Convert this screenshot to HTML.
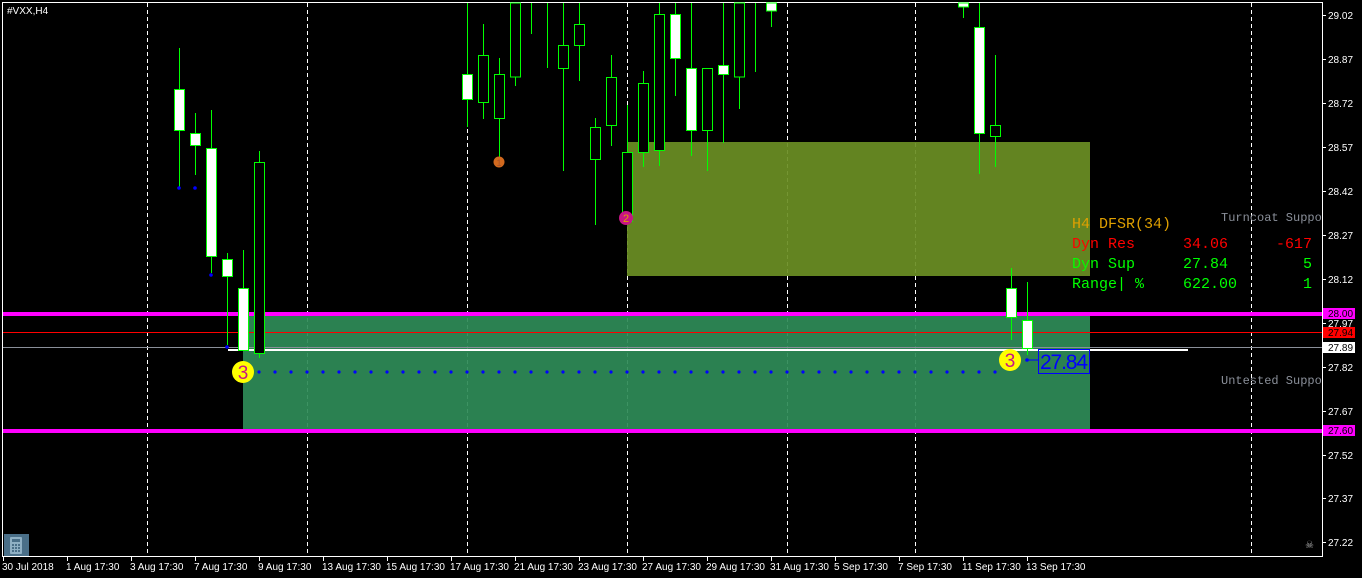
<!DOCTYPE html>
<html><head><meta charset="utf-8"><style>
html,body{margin:0;padding:0;background:#000;width:1362px;height:578px;overflow:hidden}
svg{display:block}
.ax{font-family:"Liberation Sans",sans-serif;font-size:10px;fill:#fff}
.mono{font-family:"Liberation Mono",monospace;font-size:15px}
</style></head><body>
<svg width="1362" height="578" viewBox="0 0 1362 578" xmlns="http://www.w3.org/2000/svg">
<rect width="1362" height="578" fill="#000"/>
<!-- grid -->
<g stroke="#fff" stroke-width="1" stroke-dasharray="4,3">
<line x1="147.5" y1="3" x2="147.5" y2="556"/>
<line x1="307.5" y1="3" x2="307.5" y2="556"/>
<line x1="467.5" y1="3" x2="467.5" y2="556"/>
<line x1="627.5" y1="3" x2="627.5" y2="556"/>
<line x1="787.5" y1="3" x2="787.5" y2="556"/>
<line x1="915.5" y1="3" x2="915.5" y2="556"/>
<line x1="1251.5" y1="3" x2="1251.5" y2="556"/>
</g>
<!-- zones -->
<rect x="627" y="142" width="463" height="134" fill="#6b8e23" fill-opacity="0.93"/>
<rect x="243" y="316" width="847" height="113" fill="#2e8b57" fill-opacity="0.93"/>
<!-- frame -->
<rect x="2.5" y="2.5" width="1320" height="554" fill="none" stroke="#fff"/>
<!-- horizontal lines -->
<line x1="3" y1="332.5" x2="1322" y2="332.5" stroke="#f00"/>
<line x1="3" y1="347.5" x2="1322" y2="347.5" stroke="#8a8f99"/>
<rect x="228" y="349" width="960" height="2" fill="#fff"/>
<rect x="3" y="312" width="1319" height="4" fill="#f0f"/>
<rect x="3" y="429" width="1319" height="4" fill="#f0f"/>
<!-- candles -->
<g stroke="#0f0" stroke-width="1">
<line x1="179.5" y1="48" x2="179.5" y2="187"/><rect x="174.5" y="89.5" width="10" height="41" fill="#fff"/>
<line x1="195.5" y1="113" x2="195.5" y2="175"/><rect x="190.5" y="133.5" width="10" height="12" fill="#fff"/>
<line x1="211.5" y1="110" x2="211.5" y2="273"/><rect x="206.5" y="148.5" width="10" height="108" fill="#fff"/>
<line x1="227.5" y1="253" x2="227.5" y2="345"/><rect x="222.5" y="259.5" width="10" height="17" fill="#fff"/>
<line x1="243.5" y1="250" x2="243.5" y2="348"/><rect x="238.5" y="288.5" width="10" height="62" fill="#fff"/>
<line x1="259.5" y1="151" x2="259.5" y2="358"/><rect x="254.5" y="162.5" width="10" height="191" fill="#000"/>
<line x1="467.5" y1="3" x2="467.5" y2="127"/><rect x="462.5" y="74.5" width="10" height="25" fill="#fff"/>
<line x1="483.5" y1="24" x2="483.5" y2="119"/><rect x="478.5" y="55.5" width="10" height="47" fill="#000"/>
<line x1="499.5" y1="58" x2="499.5" y2="165"/><rect x="494.5" y="74.5" width="10" height="44" fill="#000"/>
<line x1="515.5" y1="3" x2="515.5" y2="86"/><rect x="510.5" y="3" width="10" height="74" fill="#000"/>
<line x1="531.5" y1="3" x2="531.5" y2="34"/>
<line x1="547.5" y1="3" x2="547.5" y2="68"/>
<line x1="563.5" y1="3" x2="563.5" y2="171"/><rect x="558.5" y="45.5" width="10" height="23" fill="#000"/>
<line x1="579.5" y1="3" x2="579.5" y2="81"/><rect x="574.5" y="24.5" width="10" height="21" fill="#000"/>
<line x1="595.5" y1="118" x2="595.5" y2="225"/><rect x="590.5" y="127.5" width="10" height="32" fill="#000"/>
<line x1="611.5" y1="55" x2="611.5" y2="146"/><rect x="606.5" y="77.5" width="10" height="48" fill="#000"/>
<line x1="627.5" y1="105" x2="627.5" y2="222"/><rect x="622.5" y="152.5" width="10" height="69" fill="#000"/>
<line x1="643.5" y1="71" x2="643.5" y2="167"/><rect x="638.5" y="83.5" width="10" height="69" fill="#000"/>
<line x1="659.5" y1="3" x2="659.5" y2="166"/><rect x="654.5" y="14.5" width="10" height="136" fill="#000"/>
<line x1="675.5" y1="3" x2="675.5" y2="96"/><rect x="670.5" y="14.5" width="10" height="44" fill="#fff"/>
<line x1="691.5" y1="3" x2="691.5" y2="156"/><rect x="686.5" y="68.5" width="10" height="62" fill="#fff"/>
<line x1="707.5" y1="68" x2="707.5" y2="171"/><rect x="702.5" y="68.5" width="10" height="62" fill="#000"/>
<line x1="723.5" y1="3" x2="723.5" y2="143"/><rect x="718.5" y="65.5" width="10" height="9" fill="#fff"/>
<line x1="739.5" y1="3" x2="739.5" y2="109"/><rect x="734.5" y="3" width="10" height="74" fill="#000"/>
<line x1="755.5" y1="3" x2="755.5" y2="72"/>
<line x1="771.5" y1="3" x2="771.5" y2="27"/><rect x="766.5" y="3" width="10" height="8" fill="#fff"/>
<line x1="963.5" y1="3" x2="963.5" y2="18"/><rect x="958.5" y="3" width="10" height="4" fill="#fff"/>
<line x1="979.5" y1="3" x2="979.5" y2="174"/><rect x="974.5" y="27.5" width="10" height="106" fill="#fff"/>
<line x1="995.5" y1="55" x2="995.5" y2="167"/><rect x="990.5" y="125.5" width="10" height="11" fill="#000"/>
<line x1="1011.5" y1="268" x2="1011.5" y2="340"/><rect x="1006.5" y="288.5" width="10" height="29" fill="#fff"/>
<line x1="1027.5" y1="282" x2="1027.5" y2="355"/><rect x="1022.5" y="320.5" width="10" height="28" fill="#fff"/>
</g>
<!-- blue dots -->
<g fill="#00f">
<circle cx="179" cy="188" r="1.8"/><circle cx="195" cy="188" r="1.8"/><circle cx="211" cy="275" r="1.8"/><circle cx="227" cy="347" r="1.8"/>
<circle cx="259" cy="372" r="1.6"/><circle cx="275" cy="372" r="1.6"/><circle cx="291" cy="372" r="1.6"/><circle cx="307" cy="372" r="1.6"/><circle cx="323" cy="372" r="1.6"/><circle cx="339" cy="372" r="1.6"/><circle cx="355" cy="372" r="1.6"/><circle cx="371" cy="372" r="1.6"/><circle cx="387" cy="372" r="1.6"/><circle cx="403" cy="372" r="1.6"/><circle cx="419" cy="372" r="1.6"/><circle cx="435" cy="372" r="1.6"/><circle cx="451" cy="372" r="1.6"/><circle cx="467" cy="372" r="1.6"/><circle cx="483" cy="372" r="1.6"/><circle cx="499" cy="372" r="1.6"/><circle cx="515" cy="372" r="1.6"/><circle cx="531" cy="372" r="1.6"/><circle cx="547" cy="372" r="1.6"/><circle cx="563" cy="372" r="1.6"/><circle cx="579" cy="372" r="1.6"/><circle cx="595" cy="372" r="1.6"/><circle cx="611" cy="372" r="1.6"/><circle cx="627" cy="372" r="1.6"/><circle cx="643" cy="372" r="1.6"/><circle cx="659" cy="372" r="1.6"/><circle cx="675" cy="372" r="1.6"/><circle cx="691" cy="372" r="1.6"/><circle cx="707" cy="372" r="1.6"/><circle cx="723" cy="372" r="1.6"/><circle cx="739" cy="372" r="1.6"/><circle cx="755" cy="372" r="1.6"/><circle cx="771" cy="372" r="1.6"/><circle cx="787" cy="372" r="1.6"/><circle cx="803" cy="372" r="1.6"/><circle cx="819" cy="372" r="1.6"/><circle cx="835" cy="372" r="1.6"/><circle cx="851" cy="372" r="1.6"/><circle cx="867" cy="372" r="1.6"/><circle cx="883" cy="372" r="1.6"/><circle cx="899" cy="372" r="1.6"/><circle cx="915" cy="372" r="1.6"/><circle cx="931" cy="372" r="1.6"/><circle cx="947" cy="372" r="1.6"/><circle cx="963" cy="372" r="1.6"/><circle cx="979" cy="372" r="1.6"/><circle cx="995" cy="372" r="1.6"/>
<circle cx="1027" cy="360" r="1.8"/>
</g>
<line x1="1027" y1="360" x2="1038" y2="360" stroke="#00f"/>
<rect x="1038.5" y="349.5" width="51" height="24" fill="none" stroke="#00f"/>
<text x="1040" y="369" fill="#00f" font-family="Liberation Sans,sans-serif" font-size="21" textLength="48">27.84</text>
<!-- markers -->
<circle cx="499" cy="162" r="5.5" fill="#d2691e"/><text x="499" y="166" text-anchor="middle" fill="#a0522d" font-family="Liberation Sans,sans-serif" font-size="9">1</text>
<circle cx="626" cy="218" r="7" fill="#c71585"/><text x="626" y="222" text-anchor="middle" fill="#e0a000" font-family="Liberation Sans,sans-serif" font-size="11">2</text>
<circle cx="243" cy="372" r="11" fill="#ff0"/><text x="243" y="379" text-anchor="middle" fill="#c71585" font-family="Liberation Sans,sans-serif" font-size="19">3</text>
<circle cx="1010" cy="360" r="11" fill="#ff0"/><text x="1010" y="367" text-anchor="middle" fill="#c71585" font-family="Liberation Sans,sans-serif" font-size="19">3</text>
<!-- info text -->
<g class="mono">
<text x="1072" y="228" fill="#e0a000">H4 DFSR(34)</text>
<text x="1072" y="248" fill="#f00">Dyn Res</text><text x="1183" y="248" fill="#f00">34.06</text><text x="1312" y="248" fill="#f00" text-anchor="end">-617</text>
<text x="1072" y="268" fill="#0f0">Dyn Sup</text><text x="1183" y="268" fill="#0f0">27.84</text><text x="1312" y="268" fill="#0f0" text-anchor="end">5</text>
<text x="1072" y="288" fill="#0f0">Range| %</text><text x="1183" y="288" fill="#0f0">622.00</text><text x="1312" y="288" fill="#0f0" text-anchor="end">1</text>
</g>
<svg x="1210" y="200" width="112" height="200" overflow="hidden">
<text x="11" y="21" fill="#8a8f99" font-family="Liberation Mono,monospace" font-size="12">Turncoat Support</text>
<text x="11" y="184" fill="#8a8f99" font-family="Liberation Mono,monospace" font-size="12">Untested Support</text>
</svg>
<!-- title -->
<text x="7" y="14" class="ax">#VXX,H4</text>
<!-- right axis -->
<g stroke="#fff">
<line x1="1322" y1="15.5" x2="1326" y2="15.5"/><line x1="1322" y1="59.5" x2="1326" y2="59.5"/><line x1="1322" y1="103.5" x2="1326" y2="103.5"/><line x1="1322" y1="147.5" x2="1326" y2="147.5"/><line x1="1322" y1="191.5" x2="1326" y2="191.5"/><line x1="1322" y1="235.5" x2="1326" y2="235.5"/><line x1="1322" y1="279.5" x2="1326" y2="279.5"/><line x1="1322" y1="323.5" x2="1326" y2="323.5"/><line x1="1322" y1="367.5" x2="1326" y2="367.5"/><line x1="1322" y1="411.5" x2="1326" y2="411.5"/><line x1="1322" y1="455.5" x2="1326" y2="455.5"/><line x1="1322" y1="498.5" x2="1326" y2="498.5"/><line x1="1322" y1="542.5" x2="1326" y2="542.5"/>
</g>
<g class="ax">
<text x="1328" y="19">29.02</text><text x="1328" y="63">28.87</text><text x="1328" y="107">28.72</text><text x="1328" y="151">28.57</text><text x="1328" y="195">28.42</text><text x="1328" y="239">28.27</text><text x="1328" y="283">28.12</text><text x="1328" y="327">27.97</text><text x="1328" y="371">27.82</text><text x="1328" y="415">27.67</text><text x="1328" y="459">27.52</text><text x="1328" y="502">27.37</text><text x="1328" y="546">27.22</text>
</g>
<rect x="1323" y="308" width="32" height="11" fill="#f0f"/><text x="1328" y="317" class="ax" style="fill:#000">28.00</text>
<rect x="1323" y="327" width="32" height="11" fill="#f00"/><text x="1328" y="336" class="ax" style="fill:#000">27.94</text>
<rect x="1323" y="342" width="32" height="11" fill="#fff"/><text x="1328" y="351" class="ax" style="fill:#000">27.89</text>
<rect x="1323" y="425" width="32" height="11" fill="#f0f"/><text x="1328" y="434" class="ax" style="fill:#000">27.60</text>
<!-- bottom axis -->
<g stroke="#fff">
<line x1="3.5" y1="557" x2="3.5" y2="561"/><line x1="67.5" y1="557" x2="67.5" y2="561"/><line x1="131.5" y1="557" x2="131.5" y2="561"/><line x1="195.5" y1="557" x2="195.5" y2="561"/><line x1="259.5" y1="557" x2="259.5" y2="561"/><line x1="323.5" y1="557" x2="323.5" y2="561"/><line x1="387.5" y1="557" x2="387.5" y2="561"/><line x1="451.5" y1="557" x2="451.5" y2="561"/><line x1="515.5" y1="557" x2="515.5" y2="561"/><line x1="579.5" y1="557" x2="579.5" y2="561"/><line x1="643.5" y1="557" x2="643.5" y2="561"/><line x1="707.5" y1="557" x2="707.5" y2="561"/><line x1="771.5" y1="557" x2="771.5" y2="561"/><line x1="835.5" y1="557" x2="835.5" y2="561"/><line x1="899.5" y1="557" x2="899.5" y2="561"/><line x1="963.5" y1="557" x2="963.5" y2="561"/><line x1="1027.5" y1="557" x2="1027.5" y2="561"/>
</g>
<g class="ax">
<text x="2" y="570">30 Jul 2018</text><text x="66" y="570">1 Aug 17:30</text><text x="130" y="570">3 Aug 17:30</text><text x="194" y="570">7 Aug 17:30</text><text x="258" y="570">9 Aug 17:30</text><text x="322" y="570">13 Aug 17:30</text><text x="386" y="570">15 Aug 17:30</text><text x="450" y="570">17 Aug 17:30</text><text x="514" y="570">21 Aug 17:30</text><text x="578" y="570">23 Aug 17:30</text><text x="642" y="570">27 Aug 17:30</text><text x="706" y="570">29 Aug 17:30</text><text x="770" y="570">31 Aug 17:30</text><text x="834" y="570">5 Sep 17:30</text><text x="898" y="570">7 Sep 17:30</text><text x="962" y="570">11 Sep 17:30</text><text x="1026" y="570">13 Sep 17:30</text>
</g>
<!-- calculator icon -->
<rect x="4" y="534" width="25" height="22" fill="#4a6f88"/>
<rect x="10" y="537" width="12" height="17" rx="1" fill="#8fb0c4"/>
<rect x="12" y="539" width="8" height="3" fill="#4a6f88"/>
<g fill="#4a6f88"><rect x="12" y="544" width="2" height="2"/><rect x="15" y="544" width="2" height="2"/><rect x="18" y="544" width="2" height="2"/><rect x="12" y="547" width="2" height="2"/><rect x="15" y="547" width="2" height="2"/><rect x="18" y="547" width="2" height="2"/><rect x="12" y="550" width="2" height="2"/><rect x="15" y="550" width="2" height="2"/><rect x="18" y="550" width="2" height="2"/></g>
<text x="1305" y="548" fill="#aaa" font-family="DejaVu Sans,sans-serif" font-size="10">☠</text>
</svg>
</body></html>
